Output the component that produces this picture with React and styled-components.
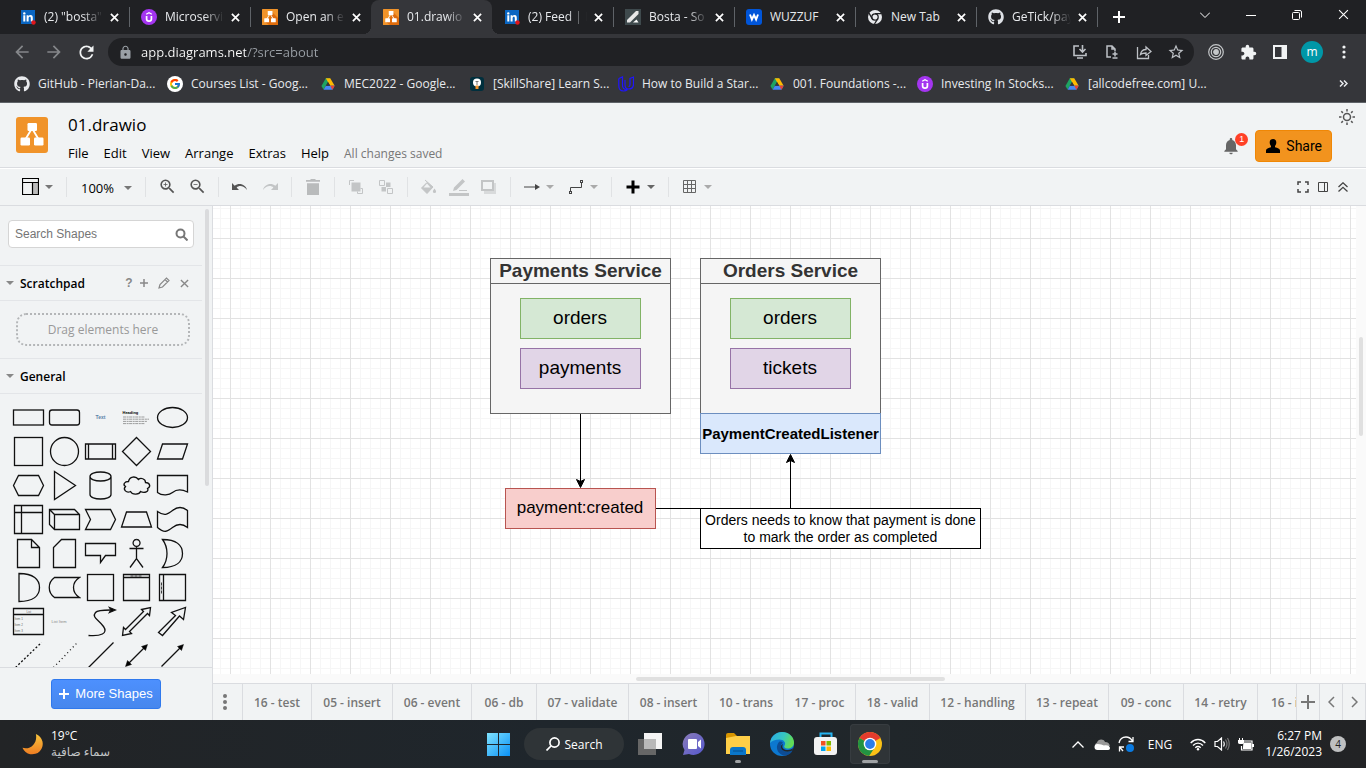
import React from "react";
import styled, { createGlobalStyle, css } from "styled-components";
import {
  MdLock, MdExtension, MdNotifications, MdZoomIn, MdZoomOut,
  MdStarBorder, MdRefresh, MdArrowBack, MdArrowForward,
} from "react-icons/md";
import { FaGithub } from "react-icons/fa";
import { FcGoogle } from "react-icons/fc";

const ui = '"Open Sans", "Noto Sans", "DejaVu Sans", sans-serif';
const arial = '"Liberation Sans", Arial, sans-serif';

const GlobalStyle = createGlobalStyle`
  * { box-sizing: border-box; }
  body { margin: 0; font-family: ${ui}; font-size: 12px; color: #000; background: #f1f3f4; }
  button { font: inherit; color: inherit; background: none; border: 0; padding: 0; margin: 0; cursor: pointer; }
  a { color: inherit; text-decoration: none; }
  h1, h2, p { margin: 0; font-weight: 400; }
  svg { display: block; flex: none; }
`;

const Shell = styled.div`
  display: flex;
  flex-direction: column;
  height: 100vh;
  overflow: hidden;
`;

/* ---------- browser chrome ---------- */
const TabStrip = styled.nav`
  display: flex;
  height: 34px;
  padding-left: 8px;
  background: #202124;
  color: #dee1e6;
  flex: none;
`;
const Tab = styled.div`
  position: relative;
  display: flex;
  align-items: center;
  flex: 0 1 121px;
  min-width: 0;
  padding: 0 7px 0 12px;
  border-radius: 8px 8px 0 0;
  ${(p) => p.$active && css`background: #35363a; z-index: 1;
    &::before, &::after { content: ""; position: absolute; bottom: 0; width: 8px; height: 8px; }
    &::before { left: -8px; background: radial-gradient(circle at 0 0, transparent 8px, #35363a 8px); }
    &::after { right: -8px; background: radial-gradient(circle at 100% 0, transparent 8px, #35363a 8px); }
  `}
  ${(p) => p.$divider && css`
    &::after { content: ""; position: absolute; right: -1px; top: 7px; width: 1px; height: 20px; background: #5f6368; }
  `}
`;
const TabLink = styled.a`
  display: flex;
  align-items: center;
  flex: 1;
  min-width: 0;
  gap: 8px;
`;
const TabTitle = styled.span`
  flex: 1;
  min-width: 0;
  overflow: hidden;
  white-space: nowrap;
  line-height: 20px;
  color: #e8eaed;
  ${(p) => p.$fade && css`mask-image: linear-gradient(90deg, #000 66%, transparent);`}
`;
const TabClose = styled.button`
  display: flex;
  align-items: center;
  justify-content: center;
  width: 16px;
  height: 16px;
  margin-left: 3px;
  color: #fff;
`;
const NewTab = styled.button`
  width: 28px;
  margin: 0 8px;
  display: flex;
  align-items: center;
  justify-content: center;
  color: #fff;
`;
const WindowButtons = styled.div`
  display: flex;
  margin-left: auto;
`;
const WindowButton = styled.button`
  display: flex;
  align-items: center;
  justify-content: center;
  width: 46px;
  height: 29px;
  color: #fff;
`;
const AddressRow = styled.div`
  display: flex;
  align-items: center;
  height: 36px;
  padding: 0 6px;
  background: #35363a;
  color: #f1f3f4;
  flex: none;
`;
const IconButton = styled.button`
  display: flex;
  align-items: center;
  justify-content: center;
  width: 32px;
  height: 28px;
  flex: none;
  color: ${(p) => p.$color || "inherit"};
`;
const AddressBar = styled.div`
  display: flex;
  align-items: center;
  flex: 1;
  min-width: 0;
  height: 28px;
  margin: 0 6px;
  padding: 0 2px 0 10px;
  border-radius: 14px;
  background: #202124;
  color: #bdc1c6;
`;
const AddressInput = styled.input`
  flex: 1;
  min-width: 0;
  height: 20px;
  margin-left: 8px;
  padding: 0;
  border: 0;
  outline: 0;
  font: 13px/20px ${ui};
  color: transparent;
  background: linear-gradient(90deg, #fff 105px, #9aa0a6 105px);
  background-clip: text;
  -webkit-background-clip: text;
`;
const Avatar = styled.span`
  display: grid;
  place-items: center;
  width: 22px;
  height: 22px;
  border-radius: 50%;
  background: #0097a7;
  color: #fff;
  font-size: 12px;
  line-height: 20px;
`;
const BookmarkBar = styled.nav`
  display: flex;
  align-items: center;
  height: 33px;
  padding: 0 14px 5px;
  background: #35363a;
  border-bottom: 1px solid #5f6368;
  color: #e8eaed;
  flex: none;
`;
const Bookmark = styled.a`
  display: flex;
  align-items: center;
  gap: 8px;
  flex: 0 1 ${(p) => p.$w}px;
  min-width: 0;
  white-space: nowrap;
  line-height: 18px;
`;
const MoreBookmarks = styled.button`
  margin-left: auto;
  width: 18px;
  height: 18px;
  display: flex;
  align-items: center;
  justify-content: center;
`;

/* ---------- editor header ---------- */
const Header = styled.header`
  display: flex;
  height: 65px;
  padding-left: 16px;
  background: #f1f3f4;
  border-bottom: 1px solid #dadce0;
  flex: none;
`;
const Logo = styled.a`
  display: block;
  margin: 14px 20px 0 0;
`;
const TitleBlock = styled.div`
  flex: 1;
  padding-top: 10px;
`;
const FileName = styled.h1`
  font-size: 17px;
  line-height: 24px;
`;
const MenuBar = styled.nav`
  display: flex;
  align-items: center;
  gap: 15px;
  height: 32px;
  font-size: 13px;
`;
const Status = styled.span`
  font-size: 12px;
  color: #777;
`;
const HeaderRight = styled.div`
  display: flex;
  align-items: flex-start;
  padding: 5px 10px 0 0;
`;
const BellButton = styled.button`
  position: relative;
  margin: 28px 14px 0 0;
  color: #666;
`;
const BellBadge = styled.span`
  position: absolute;
  top: -3px;
  right: -7px;
  width: 13px;
  height: 13px;
  border-radius: 50%;
  background: #ff4027;
  color: #fff;
  font: 9px/13px ${arial};
  text-align: center;
`;
const ShareButton = styled.button`
  display: flex;
  align-items: center;
  gap: 4px;
  height: 32px;
  margin: 22px 6px 0 0;
  padding: 0 9px 0 8px;
  border: 1px solid #f08705;
  border-radius: 4px;
  background: #f2931e;
  font-family: Roboto, ${arial};
  font-size: 14px;
`;
const ThemeButton = styled.button`
  color: #555;
`;
const Toolbar = styled.div`
  display: flex;
  align-items: center;
  height: 38px;
  padding: 0 13px 1px 10px;
  background: #f1f3f4;
  border-top: 1px solid #fff;
  border-bottom: 1px solid #dadce0;
  flex: none;
`;
const ToolGroup = styled.div`
  display: flex;
  align-items: center;
  height: 20px;
  padding: 0 6px;
  border-right: 1px solid ${(p) => (p.$last ? "transparent" : "#e0e2e4")};
`;
const ToolButton = styled.button`
  display: flex;
  align-items: center;
  justify-content: center;
  width: 30px;
  height: 24px;
  color: ${(p) => (p.$off ? "#c3c5c6" : "#555")};
`;
const DropButton = styled.button`
  display: flex;
  align-items: center;
  width: 44px;
  height: 24px;
  color: #444;
`;
const DropIcon = styled.span`
  display: flex;
  justify-content: center;
  width: 29px;
`;
const ZoomButton = styled.button`
  display: flex;
  align-items: center;
  justify-content: space-between;
  width: 66px;
  height: 24px;
  padding: 2px 7px 0 8px;
  font-size: 13px;
`;
const ToolbarEnd = styled.div`
  display: flex;
  margin-left: auto;
`;
const SmallTool = styled.button`
  display: flex;
  align-items: center;
  justify-content: center;
  width: 20px;
  height: 20px;
  color: #444;
`;

/* ---------- main area ---------- */
const Main = styled.main`
  display: flex;
  flex: 1;
  min-height: 0;
`;
const Sidebar = styled.aside`
  display: flex;
  flex-direction: column;
  width: 213px;
  flex: none;
  background: #f1f3f4;
  border-right: 1px solid #dadce0;
`;
const SidebarScroll = styled.div`
  display: flex;
  justify-content: space-between;
  flex: 1;
  min-height: 0;
  overflow: hidden;
`;
const Palettes = styled.div`
  width: 202px;
`;
const ScrollThumb = styled.div`
  width: 4px;
  height: 277px;
  margin: 3px 3px 0 0;
  border-radius: 2px;
  background: #dadbdd;
`;
const SearchBox = styled.label`
  display: flex;
  align-items: center;
  height: 28px;
  margin: 14px 8px 17px;
  padding: 0 5px 0 6px;
  border: 1px solid #d5d5d5;
  border-radius: 4px;
  background: #fff;
  color: #777;
`;
const SearchInput = styled.input`
  flex: 1;
  min-width: 0;
  padding: 0;
  border: 0;
  outline: 0;
  background: transparent;
  font: 12px/18px ${arial};
  &::placeholder { color: #757575; opacity: 1; }
`;
const SectionTitle = styled.h2`
  display: flex;
  align-items: center;
  gap: 6px;
  height: 36px;
  padding: 0 13px 0 6px;
  border: solid #e3e5e8;
  border-width: 1px 0;
  font-size: 12px;
  font-weight: 600;
`;
const SectionName = styled.span`
  flex: 1;
`;
const SectionTool = styled.button`
  display: flex;
  align-items: center;
  justify-content: center;
  width: ${(p) => p.$w || 10}px;
  height: 16px;
  color: #888;
  font: 700 12px/16px ${arial};
`;
const DropZone = styled.div`
  display: flex;
  align-items: center;
  justify-content: center;
  height: 33px;
  margin: 12px 12px 12px 16px;
  border: 2px dotted #b4b6b8;
  border-radius: 10px;
  color: #999;
  font-size: 12px;
`;
const ShapeGrid = styled.div`
  display: grid;
  grid-template-columns: repeat(5, 36px);
  grid-auto-rows: 34px;
  padding: 6px 0 0 10px;
`;
const ShapeButton = styled.button`
  display: flex;
  align-items: center;
  justify-content: center;
`;
const SidebarFooter = styled.div`
  display: flex;
  justify-content: center;
  height: 53px;
  padding-top: 11px;
  border-top: 1px solid #dadce0;
  flex: none;
`;
const MoreShapes = styled.button`
  display: flex;
  align-items: center;
  justify-content: center;
  gap: 6px;
  width: 110px;
  height: 30px;
  border: 1px solid #3079ed;
  border-radius: 3px;
  background: linear-gradient(#4d90fe, #4787ed);
  color: #fff;
  font: 13px/20px ${arial};
`;
const Workspace = styled.section`
  display: flex;
  flex-direction: column;
  flex: 1;
  min-width: 0;
`;
const CanvasFrame = styled.div`
  display: grid;
  grid-template: minmax(0, 1fr) 9px / minmax(0, 1fr) 10px;
  flex: 1;
  min-height: 0;
  background: #fafafa;
`;
const Canvas = styled.div`
  position: relative;
  overflow: hidden;
  background-color: #fff;
  background-image:
    linear-gradient(90deg, #e2e2e2 1px, transparent 1px),
    linear-gradient(#e2e2e2 1px, transparent 1px),
    linear-gradient(90deg, #f6f6f6 1px, transparent 1px),
    linear-gradient(#f6f6f6 1px, transparent 1px);
  background-size: 40px 40px, 40px 40px, 10px 10px, 10px 10px;
  background-position: 17px 32px, 17px 32px, 7px 2px, 7px 2px;
`;
const VerticalThumb = styled.div`
  width: 4px;
  height: 99px;
  margin: 131px 0 0 3px;
  border-radius: 2px;
  background: #e0e0e0;
`;
const HorizontalThumb = styled.div`
  width: 27%;
  height: 4px;
  margin: 3px 0 0 37%;
  border-radius: 2px;
  background: #e0e0e0;
`;
const Node = styled.div`
  position: absolute;
  left: ${(p) => p.$x}px;
  top: ${(p) => p.$y}px;
  width: ${(p) => p.$w}px;
  height: ${(p) => p.$h}px;
  display: flex;
  align-items: center;
  justify-content: center;
  text-align: center;
  white-space: nowrap;
  border: 1px solid ${(p) => p.$line};
  background: ${(p) => p.$fill};
  font: ${(p) => (p.$bold ? 700 : 400)} ${(p) => p.$size}px/${(p) => p.$lh || 20}px ${arial};
`;
const Lane = styled(Node)`
  display: block;
`;
const Box = styled(Node)`
  padding: 0 1px 2px 0;
`;
const LaneTitle = styled.div`
  height: 25px;
  line-height: 24px;
  border-bottom: 1px solid #666;
  color: #333;
`;
const Edges = styled.svg`
  position: absolute;
  left: 0;
  top: 0;
`;
const PageTabs = styled.nav`
  display: flex;
  height: 37px;
  border-top: 1px solid #dadce0;
  background: #f1f3f4;
  color: #777;
  flex: none;
`;
const PageMenu = styled.button`
  display: flex;
  align-items: center;
  justify-content: center;
  width: ${(p) => p.$w || 23}px;
  padding-right: ${(p) => (p.$w ? 6 : 0)}px;
  border-right: 1px solid #dadce0;
  flex: none;
`;
const PageList = styled.div`
  display: flex;
  flex: 1;
  min-width: 0;
  overflow: hidden;
  border-right: 1px solid #dadce0;
`;
const PageTab = styled.button`
  width: ${(p) => p.$w}px;
  flex: none;
  border-right: 1px solid #dadce0;
  font-size: 12px;
  font-weight: 600;
  white-space: nowrap;
`;

/* ---------- taskbar ---------- */
const Taskbar = styled.footer`
  display: grid;
  grid-template-columns: 1fr auto 1fr;
  align-items: center;
  height: 48px;
  padding: 0 20px 0 22px;
  background: linear-gradient(90deg, #222426, #1f262c 40%, #20262a 65%, #222325);
  color: #fff;
  flex: none;
`;
const Weather = styled.button`
  display: flex;
  align-items: center;
  gap: 7px;
  justify-self: start;
  text-align: left;
  line-height: 16px;
`;
const Lines = styled.span`
  display: flex;
  flex-direction: column;
`;
const Arabic = styled.span`
  color: #c4c6c8;
`;
const TaskButtons = styled.div`
  display: flex;
  align-items: center;
`;
const TaskButton = styled.button`
  position: relative;
  display: grid;
  place-items: center;
  width: 40px;
  height: 40px;
  margin: 0 2px;
  border-radius: 4px;
  ${(p) => p.$active && css`background: #2f3437; box-shadow: inset 0 0 0 1px #373c40;`}
  ${(p) => p.$running && css`
    &::after { content: ""; position: absolute; bottom: 1px; left: 50%; width: ${p.$active ? 16 : 6}px; height: 3px;
      margin-left: ${p.$active ? -8 : -3}px; border-radius: 2px; background: #a0a3a5; }
  `}
`;
const TaskSearch = styled.button`
  display: flex;
  align-items: center;
  justify-content: center;
  gap: 5px;
  width: 100px;
  height: 32px;
  margin: 0 4px;
  border-radius: 16px;
  background: #2f3437;
`;
const Tray = styled.div`
  display: flex;
  align-items: center;
  justify-self: end;
`;
const TrayButton = styled.button`
  display: flex;
  align-items: center;
  justify-content: center;
  width: ${(p) => p.$w || 24}px;
  height: 32px;
`;
const Clock = styled.button`
  width: 60px;
  text-align: right;
  line-height: 16px;
`;
const CountBadge = styled.span`
  display: grid;
  place-items: center;
  width: 16px;
  height: 16px;
  margin-left: 8px;
  border-radius: 50%;
  background: #bfc0c1;
  color: #222;
  font-size: 10px;
  line-height: 16px;
`;

/* ---------- icons ---------- */
const Svg = ({ w = 16, h = w, box, sw = 1, children }) => (
  <svg width={w} height={h} viewBox={box || `0 0 ${w} ${h}`} fill="none" stroke="currentColor" strokeWidth={sw} aria-hidden="true">
    {children}
  </svg>
);
const Cross = ({ s = 10, sw = 1.6 }) => <Svg w={s} box="0 0 10 10" sw={sw}><path d="M1 1l8 8M9 1l-8 8" /></Svg>;
const Caret = ({ color = "#888" }) => <Svg w={8} h={4}><path d="M0 0h8l-4 4z" fill={color} stroke="none" /></Svg>;

const LinkedIn = () => (
  <Svg w={16}>
    <rect x="1" y="1" width="14" height="14" fill="#0a66c2" stroke="none" />
    <g fill="#fff" stroke="none"><circle cx="4.3" cy="4.4" r="1.2" /><path d="M3.3 6.3h2v6.2h-2zM6.6 6.3h1.9v.9c.4-.7 1.1-1.1 2-1.1 1.8 0 2.300 1.200 2.300 2.900v3.500h-2V9.300c0-.9-.2-1.500-1-1.500s-1.200.6-1.200 1.500v3.200h-2z" /></g>
    <circle cx="13.5" cy="13.5" r="2.2" fill="#e0161b" stroke="none" />
  </Svg>
);
const Udemy = () => (
  <Svg w={16}>
    <circle cx="8" cy="8" r="8" fill="#a435f0" stroke="none" />
    <path d="M5.2 5.3L8 3.700l2.800 1.600" stroke="#fff" strokeWidth="1.300" />
    <path d="M5.600 7v3c0 1.500 1 2.200 2.400 2.200s2.400-.7 2.400-2.200V7" stroke="#fff" strokeWidth="1.700" />
  </Svg>
);
const Drawio = ({ w = 16, h = 16 }) => (
  <Svg w={w} h={h} box={w === h ? "0 2 32 32" : "0 0 32 36"}>
    <rect x="0" y={w === h ? 2 : 0} width="32" height={w === h ? 32 : 36} rx={w === h ? 1 : 3} fill="#f0932a" stroke="none" />
    {w === h && <path d="M20 8l12 12v14H14l-8-6 10-12z" fill="#df6c0c" stroke="none" />}
    <path d="M15 13L9 23M17 13l6 10" stroke="#fff" strokeWidth="1.800" />
    <g fill="#fff" stroke="none"><rect x="11.500" y="6" width="9.500" height="8" rx="1.200" /><rect x="4.500" y="20.500" width="9.500" height="8" rx="1.200" /><rect x="18" y="20.500" width="9.500" height="8" rx="1.200" /></g>
  </Svg>
);
const BostaIcon = () => (
  <Svg w={16}><rect width="16" height="16" fill="#3f4a4d" stroke="none" /><path d="M2 13.500V11L11 2h2.500v3L5 13.500z" fill="#e8e8e8" stroke="none" /><path d="M8 13.500l3.500-3 2 3z" fill="#fff" stroke="none" /></Svg>
);
const Wuzzuf = () => (
  <Svg w={16}><rect width="16" height="16" rx="3" fill="#0055d9" stroke="none" /><path d="M4 5.500l1.900 5L8 6l2.100 4.500L12 5.500" stroke="#fff" strokeWidth="1.900" /></Svg>
);
const ChromeMono = () => (
  <Svg w={16}><circle cx="8" cy="8" r="7" fill="#e8eaed" stroke="none" /><circle cx="8" cy="8" r="3.200" fill="#e8eaed" stroke="#202124" strokeWidth="1.300" /><path d="M8 4.700h6.500M5.200 9.700L2 4.200M10.800 9.700L7.500 15" stroke="#202124" strokeWidth="1.300" /></Svg>
);
const Drive = () => (
  <Svg w={16} box="-1 -1 18 18">
    <g stroke="none"><path d="M5.500 1.500h5L5.600 10 3 14.300.6 10.200z" fill="#1ea362" /><path d="M5.500 1.500h5l5 8.600h-5z" fill="#ffba00" /><path d="M5.600 10h9.900L13 14.400H3z" fill="#4688f4" /><path d="M8 5.800L5.600 10h4.900z" fill="#35363a" /><path d="M13 14.400l2.500-4.300h-5z" fill="#e94235" /></g>
  </Svg>
);
const Bulb = () => (
  <Svg w={16}><rect x="1" y="1" width="14" height="14" rx="3" fill="#002f3d" stroke="none" /><circle cx="8" cy="6.500" r="4" fill="#fff" stroke="none" /><path d="M6.500 9.500h3v3.500h-3z" fill="#f0932a" stroke="none" /><path d="M6.500 5.500h3M8 5.500V9" stroke="#777" /></Svg>
);
const Udacity = () => (
  <Svg w={16}><path d="M.8 2.500L4.500 1v8c0 3 1.500 4.500 4 4.500M.8 2.500V9.500c0 3.500 2 5.500 4.700 5.500 1.500 0 3-.5 4-1.500M7 4v4.500c0 3 1 4.500 3.500 4.500s5-1.500 5-5V1L12 2.500V8c0 1.500-.5 2.500-1.500 2.500" stroke="#2015ff" strokeWidth="1.200" /></Svg>
);
const ChromeColor = () => (
  <Svg w={24}>
    <g stroke="none"><circle cx="12" cy="12" r="12" fill="#fbc116" /><path d="M12 12L1.600 6A12 12 0 0 1 22.400 6z" fill="#e33b2e" /><path d="M1.600 6a12 12 0 0 0 9.500 18l5.900-9-5-3z" fill="#229342" /><circle cx="12" cy="12" r="6.300" fill="#fff" /><circle cx="12" cy="12" r="4.900" fill="#2a7de9" /></g>
  </Svg>
);

const tabs = [
  { title: "(2) \"bosta\"", icon: <LinkedIn />, divider: true, fade: true },
  { title: "Microservic", icon: <Udemy />, divider: true, fade: true },
  { title: "Open an e", icon: <Drawio />, fade: true },
  { title: "01.drawio", icon: <Drawio />, active: true, fade: true },
  { title: "(2) Feed | L", icon: <LinkedIn />, divider: true, fade: true },
  { title: "Bosta - So", icon: <BostaIcon />, divider: true, fade: true },
  { title: "WUZZUF", icon: <Wuzzuf />, divider: true },
  { title: "New Tab", icon: <ChromeMono />, divider: true },
  { title: "GeTick/pay", icon: <FaGithub size={16} />, divider: true, fade: true },
];
const bookmarks = [
  ["GitHub - Pierian-Da...", <FaGithub size={16} />, 153],
  ["Courses List - Goog...", <Svg w={16}><circle cx="8" cy="8" r="8" fill="#fff" stroke="none" /><FcGoogle x="2" y="2" size={12} /></Svg>, 153],
  ["MEC2022 - Google...", <Drive />, 149],
  ["[SkillShare] Learn S...", <Bulb />, 149],
  ["How to Build a Star...", <Udacity />, 151],
  ["001. Foundations -...", <Drive />, 148],
  ["Investing In Stocks...", <Udemy />, 147],
  ["[allcodefree.com] U...", <Drive />, 149],
];

const Browser = () => (
  <>
    <TabStrip aria-label="Browser tabs">
      {tabs.map(({ title, icon, divider, active, fade }) => (
        <Tab key={title} $divider={divider} $active={active}>
          <TabLink href="#tab">{icon}<TabTitle $fade={fade}>{title}</TabTitle></TabLink>
          <TabClose aria-label="Close tab"><Cross s={9} sw={1.900} /></TabClose>
        </Tab>
      ))}
      <NewTab aria-label="New tab"><Svg w={12} sw={2}><path d="M6 0v12M0 6h12" /></Svg></NewTab>
      <WindowButtons>
        <WindowButton aria-label="Search tabs"><Svg w={10} h={6}><path d="M0 .5l5 5 5-5" /></Svg></WindowButton>
        <WindowButton aria-label="Minimize"><Svg w={10}><path d="M0 5.500h10" /></Svg></WindowButton>
        <WindowButton aria-label="Restore"><Svg w={10}><rect x=".5" y="2.500" width="7" height="7" rx="1" /><path d="M2.500.500H8Q9.500.500 9.500 2v5.500" /></Svg></WindowButton>
        <WindowButton aria-label="Close window"><Cross s={11} sw={1} /></WindowButton>
      </WindowButtons>
    </TabStrip>
    <AddressRow>
      <IconButton $color="#85878a" aria-label="Back"><MdArrowBack size={20} /></IconButton>
      <IconButton $color="#85878a" aria-label="Forward"><MdArrowForward size={20} /></IconButton>
      <IconButton aria-label="Reload"><MdRefresh size={21} /></IconButton>
      <AddressBar>
        <MdLock size={15} color="#9aa0a6" />
        <AddressInput aria-label="Address" defaultValue="app.diagrams.net/?src=about" />
        <IconButton aria-label="Install app"><Svg w={16} sw={1.600}><path d="M7 2H2v9.500h12V9M5 14h6M10.500 1v6.500M7.500 5l3 3 3-3" /></Svg></IconButton>
        <IconButton aria-label="Save page"><Svg w={16} sw={1.500}><path d="M7 13H3V2h5l3 3v2M8 2v3h3M11 7.500v5M8.500 10h5M8.500 14h5" /></Svg></IconButton>
        <IconButton aria-label="Share page"><Svg w={16} sw={1.300}><path d="M1.500 3v11.500h11V11M4.500 10.500C5 7 7 5.500 10 5.500V3l5 4.500-5 4V9C8 9 6 9.300 4.500 10.500z" /></Svg></IconButton>
        <IconButton aria-label="Bookmark page"><MdStarBorder size={18} /></IconButton>
      </AddressBar>
      <IconButton aria-label="Screen recorder" $color="#c4c7c9"><Svg w={16} sw={1.200}><circle cx="8" cy="8" r="7.300" /><circle cx="8" cy="8" r="4.700" /><circle cx="8" cy="8" r="2.300" fill="currentColor" /></Svg></IconButton>
      <IconButton aria-label="Extensions"><MdExtension size={17} /></IconButton>
      <IconButton aria-label="Side panel"><Svg w={14} sw={2}><rect x="1" y="1" width="12" height="12" /><path d="M8.500 1H13v12H8.500z" fill="currentColor" stroke="none" /></Svg></IconButton>
      <IconButton aria-label="Profile"><Avatar>m</Avatar></IconButton>
      <IconButton aria-label="Browser menu"><Svg w={4} h={14}><g fill="currentColor" stroke="none"><circle cx="2" cy="2" r="1.600" /><circle cx="2" cy="7" r="1.600" /><circle cx="2" cy="12" r="1.600" /></g></Svg></IconButton>
    </AddressRow>
    <BookmarkBar aria-label="Bookmarks">
      {bookmarks.map(([label, icon, w]) => <Bookmark href="#bookmark" key={label} $w={w}>{icon}{label}</Bookmark>)}
      <MoreBookmarks aria-label="More bookmarks"><Svg w={9} h={7} sw={1.500}><path d="M1 .5l3 3-3 3M5 .5l3 3-3 3" /></Svg></MoreBookmarks>
    </BookmarkBar>
  </>
);

const EditorHeader = () => (
  <>
    <Header>
      <Logo href="#home" aria-label="Home"><Drawio w={32} h={36} /></Logo>
      <TitleBlock>
        <FileName>01.drawio</FileName>
        <MenuBar aria-label="Main menu">
          {["File", "Edit", "View", "Arrange", "Extras", "Help"].map((m) => <button key={m}>{m}</button>)}
          <Status>All changes saved</Status>
        </MenuBar>
      </TitleBlock>
      <HeaderRight>
        <BellButton aria-label="Notifications"><MdNotifications size={20} /><BellBadge>1</BellBadge></BellButton>
        <ShareButton>
          <Svg w={18}><path d="M9 2c2.300 0 3.300 1.500 3.300 3.500 0 1.500-.6 2.800-1.300 3.500v1.300c2.500.8 5 1.400 5 3.200V16H2v-2.500c0-1.800 2.500-2.400 5-3.200V9c-.7-.7-1.300-2-1.300-3.500C5.700 3.500 6.700 2 9 2z" fill="#000" stroke="none" /></Svg>
          Share
        </ShareButton>
        <ThemeButton aria-label="Theme"><Svg w={18} sw={1.500}><circle cx="9" cy="9" r="3.500" /><path d="M9 1v2.500M9 14.500V17M1 9h2.500M14.500 9H17M3.300 3.300l1.600 1.600M13.100 13.100l1.600 1.600M14.700 3.300l-1.600 1.600M4.900 13.100l-1.600 1.600" /></Svg></ThemeButton>
      </HeaderRight>
    </Header>
    <Toolbar>
      <ToolGroup>
        <DropButton aria-label="Layout"><DropIcon><Svg w={17}><rect x="10.500" y="4.500" width="5.500" height="12" fill="#bbb" stroke="none" /><path d="M.5.500h16v16H.500zM.5 4.500h16M10.500 4.500v12" stroke="#000" strokeWidth="1.200" /></Svg></DropIcon><Caret color="#777" /></DropButton>
      </ToolGroup>
      <ToolGroup><ZoomButton aria-label="Zoom level">100%<Caret color="#777" /></ZoomButton></ToolGroup>
      <ToolGroup>
        <ToolButton aria-label="Zoom in"><MdZoomIn size={19} /></ToolButton>
        <ToolButton aria-label="Zoom out"><MdZoomOut size={19} /></ToolButton>
      </ToolGroup>
      <ToolGroup>
        <ToolButton aria-label="Undo"><Svg w={16} h={10}><path d="M0 1v7h7L4.600 5.500C7 3 12 3.500 15 8c-1-5.500-8-8-12.300-4.200z" fill="currentColor" stroke="none" /></Svg></ToolButton>
        <ToolButton aria-label="Redo" $off><Svg w={16} h={10}><path d="M16 1v7H9l2.400-2.500C9 3 4 3.500 1 8 2 2.500 9 0 13.300 3.800z" fill="currentColor" stroke="none" /></Svg></ToolButton>
      </ToolGroup>
      <ToolGroup><ToolButton aria-label="Delete" $off><Svg w={14} h={16}><path d="M0 1h4l1-1h4l1 1h4v1.800H0zM1 4.200h12V16H1z" fill="#b9bbbc" stroke="none" /></Svg></ToolButton></ToolGroup>
      <ToolGroup>
        <ToolButton aria-label="To front" $off><Svg w={16}><path d="M3.500 3.500h9v9h-9z" fill="currentColor" stroke="none" /><path d="M1.500 6V1.500H6M12.500 9.500h2v5h-5v-2" /></Svg></ToolButton>
        <ToolButton aria-label="To back" $off><Svg w={16}><path d="M8 3.500h4.500v4.500H8zM3.500 8H8v4.500H3.500z" fill="currentColor" stroke="none" /><path d="M1.500 1.500h5v5h-5zM9.500 9.500h5v5h-5z" /></Svg></ToolButton>
      </ToolGroup>
      <ToolGroup>
        <ToolButton aria-label="Fill color" $off><Svg w={18} h={16}><path d="M5 1l8 7-6 6.500L1.500 9 7 3.500" fill="currentColor" stroke="currentColor" strokeWidth="1" /><path d="M3.500 8.500h7L7 4.500z" fill="#f1f3f4" stroke="none" /><path d="M14.500 9.500c1 1.500 1.600 2.200 1.600 3a1.600 1.600 0 0 1-3.200 0c0-.8.600-1.500 1.600-3z" fill="currentColor" stroke="none" /></Svg></ToolButton>
        <ToolButton aria-label="Line color" $off><Svg w={20} h={18}><path d="M0 15h20v3H0zM4 13l1-3.500L13.500 1 16 3.500 7.500 12z" fill="currentColor" stroke="none" /><path d="M10 12.500h8" /></Svg></ToolButton>
        <ToolButton aria-label="Shadow" $off><Svg w={16} h={14}><path d="M3 3h12v11H3z" fill="#d8dadb" stroke="none" /><rect x="1" y="1" width="11" height="9" fill="#f1f3f4" strokeWidth="2" /></Svg></ToolButton>
      </ToolGroup>
      <ToolGroup>
        <DropButton aria-label="Connection"><DropIcon><Svg w={16} h={6}><path d="M0 3h12" /><path d="M11 0l5 3-5 3z" fill="currentColor" stroke="none" /></Svg></DropIcon><Caret color="#aaa" /></DropButton>
        <DropButton aria-label="Waypoints"><DropIcon><Svg w={16} h={16}><path d="M2.500 12.500V8.500h11V3.500" /><rect x="1.500" y="12.500" width="2" height="2" /><rect x="12.500" y="1.500" width="2" height="2" /></Svg></DropIcon><Caret color="#aaa" /></DropButton>
      </ToolGroup>
      <ToolGroup><DropButton aria-label="Insert"><DropIcon><Svg w={14} sw={3}><path d="M7 .5v13M.5 7h13" stroke="#000" /></Svg></DropIcon><Caret color="#666" /></DropButton></ToolGroup>
      <ToolGroup $last><DropButton aria-label="Table"><DropIcon><Svg w={13}><path d="M.5.500h12v12H.500zM4.500.500v12M8.500.500v12M.5 4.500h12M.5 8.500h12" stroke="#666" /></Svg></DropIcon><Caret color="#aaa" /></DropButton></ToolGroup>
      <ToolbarEnd>
        <SmallTool aria-label="Fullscreen"><Svg w={12} sw={1.500}><path d="M1 4V1h3M8 1h3v3M11 8v3H8M4 11H1V8" /></Svg></SmallTool>
        <SmallTool aria-label="Format panel"><Svg w={10}><path d="M.5.500h9v9h-9zM6.500.500v9" /></Svg></SmallTool>
        <SmallTool aria-label="Collapse"><Svg w={10} sw={1.300}><path d="M.5 5L5 .8 9.500 5M.5 9.500L5 5.300l4.500 4.200" /></Svg></SmallTool>
      </ToolbarEnd>
    </Toolbar>
  </>
);

/* Palette thumbnails, drawn around the centre of each cell */
const shapes = [
  ["Rectangle", <rect x="-15" y="-7.500" width="30" height="15" />],
  ["Rounded rectangle", <rect x="-15" y="-7.500" width="30" height="15" rx="2.500" />],
  ["Text", <text x="0" y="1" textAnchor="middle" fontSize="5" fontWeight="700" fill="#5c82a8" stroke="none">Text</text>],
  ["Textbox", <><text x="-14" y="-4" fontSize="4" fontWeight="700" fill="#000" stroke="none">Heading</text><path d="M-13.500-.5h22M-13.500 1.700h26M-13.500 3.900h24M-13.500 6.100h22" stroke="#777" strokeWidth=".7" strokeDasharray="3 .6 2 .5" /></>],
  ["Ellipse", <ellipse rx="15" ry="10" />],
  ["Square", <rect x="-14" y="-14" width="28" height="28" />],
  ["Circle", <circle r="14" />],
  ["Process", <path d="M-15-7.500h30v15h-30zM-12-7.500v15M12-7.500v15" />],
  ["Diamond", <path d="M0-14L14 0 0 14-14 0z" />],
  ["Parallelogram", <path d="M-10-7.500h25l-5 15h-25z" />],
  ["Hexagon", <path d="M-10-10h20l5 10-5 10h-20l-5-10z" />],
  ["Triangle", <path d="M-10-14L11 0l-21 14z" />],
  ["Cylinder", <path d="M-10.500-9v18c0 6 21 6 21 0V-9c0-6-21-6-21 0c0 6 21 6 21 0" />],
  ["Cloud", <path d="M-8-4c-4 0-6 3-3 5-3 3 1 7 5 5 2 4 9 3 10 0 4 2 9 0 7-3 4-2 2-6-2-6 0-4-5-5-7-3-3-4-9-3-10 2z" />],
  ["Document", <path d="M-15-10h30V6.500c-8-4-12-2-15 .5s-10 4-15 0z" />],
  ["Internal storage", <path d="M-14-14h28v28h-28zM-14-7h28M-7-14v28" />],
  ["Cube", <path d="M-15-10h25l5 5v15h-25l-5-5zM-15-10l5 5h25M-10-5v15" />],
  ["Step", <path d="M-15-10H10L15 0l-5 10h-25l5-10z" />],
  ["Trapezoid", <path d="M-10-7.500h20l5 15h-30z" />],
  ["Tape", <path d="M-15-8c7 5 10 3 15-1s10-4 15 0V8c-5-4-10-4-15 0s-8 6-15 0z" />],
  ["Note", <path d="M-11-14H3l8 8v20h-22zM3-14v8h8" />],
  ["Card", <path d="M-3-14h14v28h-22V-6z" />],
  ["Callout", <path d="M-15-10h30V2H5L0 9V2h-15z" />],
  ["Actor", <path d="M-7-5h14M0-7V5M-6.500 14L0 5l6.500 9M0-14a3.500 3.500 0 1 0 .1 0" />],
  ["Or", <path d="M-10-14C4-14 10-8 10 0S4 14-10 14C-4 6-4-6-10-14z" />],
  ["And", <path d="M-9.500-14C5-14 11-8 11 0S5 14-9.500 14z" />],
  ["Data storage", <path d="M-10-10h25C7-5 7 5 15 10h-25C-17 5-17-5-10-10z" />],
  ["Container", <rect x="-13" y="-13" width="26" height="26" />],
  ["Vertical container", <><path d="M-13-13h26v26h-26zM-13-10h26" /><path d="M-6-11.500h12" strokeDasharray="3 1" strokeWidth=".8" /></>],
  ["Horizontal container", <><path d="M-13-13h26v26h-26zM-9-13v26" /><path d="M-11-5V6" strokeDasharray="3 1" strokeWidth=".8" /></>],
  ["List", <><path d="M-15-13h30v26h-30zM-15-7h30" /><g stroke="none" fill="#666" fontSize="3"><text x="-2" y="-9">List</text><text x="-14" y="-2">Item 1</text><text x="-14" y="4">Item 2</text><text x="-14" y="10">Item 3</text></g></>],
  ["List item", <text x="-13" y="1" fontSize="4" fill="#888" stroke="none">List Item</text>],
  ["Curve", <><path d="M-12 14c12 1 20-2 15-9s-12-9-8-14c2-2.500 8-2.500 15-2.500" /><path d="M9-14l6 2.500-6 2.500 1.500-2.500z" fill="#000" /></>],
  ["Bidirectional arrow", <path d="M-14 14l1-8 2 2L7-10l-2-2 9-2-1 8-2-2L-7 10l2 2z" />],
  ["Arrow", <path d="M-14 11L3-6-1-9l14-5-2 12-4-3.500L-10 14z" />],
  ["Dashed line", <path d="M-13 12L13-13" strokeDasharray="2 2" />],
  ["Dotted line", <path d="M-11 12L12-12" strokeDasharray="1 3" />],
  ["Line", <path d="M-13 13L13-13" />],
  ["Bidirectional connector", <><path d="M-9 9L9-9" /><path d="M-11 11l2-6 4 4zM11-11L9-5 5-9z" fill="#000" strokeWidth=".5" /></>],
  ["Directional connector", <><path d="M-11 11L9-9" /><path d="M11-11L9-5 5-9z" fill="#000" strokeWidth=".5" /></>],
];

const ShapesPanel = () => (
  <Sidebar>
    <SidebarScroll>
      <Palettes>
        <SearchBox>
          <SearchInput placeholder="Search Shapes" aria-label="Search Shapes" />
          <Svg w={13} sw={2}><circle cx="5.500" cy="5.500" r="4" /><path d="M8.500 8.500l4 4" /></Svg>
        </SearchBox>
        <SectionTitle>
          <Caret color="#888" />
          <SectionName>Scratchpad</SectionName>
          <SectionTool $w={8} aria-label="Help">?</SectionTool>
          <SectionTool aria-label="Add"><Svg w={8} sw={1.500}><path d="M4 0v8M0 4h8" /></Svg></SectionTool>
          <SectionTool $w={18} aria-label="Edit"><Svg w={12} sw={1.200}><path d="M1 11l1-3.500L8.500 1 11 3.500 4.500 10zM7 2.500L9.500 5" /></Svg></SectionTool>
          <SectionTool aria-label="Close"><Cross s={9} sw={1.500} /></SectionTool>
        </SectionTitle>
        <DropZone>Drag elements here</DropZone>
        <SectionTitle><Caret color="#888" /><SectionName>General</SectionName></SectionTitle>
        <ShapeGrid>
          {shapes.map(([name, art]) => (
            <ShapeButton key={name} aria-label={name}>
              <svg width="34" height="32" viewBox="-17.5 -16.5 34 32" fill="none" stroke="#111" strokeWidth="1.300" fontFamily="Liberation Sans, sans-serif">{art}</svg>
            </ShapeButton>
          ))}
        </ShapeGrid>
      </Palettes>
      <ScrollThumb />
    </SidebarScroll>
    <SidebarFooter>
      <MoreShapes><Svg w={10} sw={2}><path d="M5 0v10M0 5h10" /></Svg>More Shapes</MoreShapes>
    </SidebarFooter>
  </Sidebar>
);

const small = { $w: 121, $h: 41, $size: 19 };
const green = { ...small, $fill: "#d5e8d4", $line: "#82b366" };
const purple = { ...small, $fill: "#e1d5e7", $line: "#9673a6" };
const lane = { $w: 181, $h: 156, $size: 19, $bold: true, $fill: "#f5f5f5", $line: "#666" };

const Diagram = () => (
  <Canvas>
    <Lane $x={277} $y={52} {...lane}><LaneTitle>Payments Service</LaneTitle></Lane>
    <Lane $x={487} $y={52} {...lane}><LaneTitle>Orders Service</LaneTitle></Lane>
    <Box $x={307} $y={92} {...green}>orders</Box>
    <Box $x={307} $y={142} {...purple}>payments</Box>
    <Box $x={517} $y={92} {...green}>orders</Box>
    <Box $x={517} $y={142} {...purple}>tickets</Box>
    <Node $x={487} $y={207} $w={181} $h={41} $fill="#dae8fc" $line="#6c8ebf" $size={15} $bold>PaymentCreatedListener</Node>
    <Edges width="800" height="360" fill="none" stroke="#000">
      <path d="M367.500 208v70M443 302.500h134.500V252" />
      <path d="M367.500 281.500l-4-8 4 2 4-2zM577.500 248.500l-4 8 4-2 4 2z" fill="#000" />
    </Edges>
    <Box $x={292} $y={282} $w={151} $h={41} $fill="#f8cecc" $line="#b85450" $size={17}>payment:created</Box>
    <Node $x={487} $y={302} $w={281} $h={41} $fill="#fff" $line="#000" $size={14} $lh={17}>Orders needs to know that payment is done<br />to mark the order as completed</Node>
  </Canvas>
);

const pages = [
  ["16 - test", 69], ["05 - insert", 81], ["06 - event", 79], ["06 - db", 65], ["07 - validate", 92],
  ["08 - insert", 80], ["10 - trans", 75], ["17 - proc", 72], ["18 - valid", 74], ["12 - handling", 96],
  ["13 - repeat", 83], ["09 - conc", 75], ["14 - retry", 74], ["16 - i", 54],
];

const Pages = () => (
  <PageTabs aria-label="Pages">
    <PageMenu $w={30} aria-label="Pages menu"><Svg w={4} h={16}><g fill="#777" stroke="none"><circle cx="2" cy="2" r="2" /><circle cx="2" cy="8" r="2" /><circle cx="2" cy="14" r="2" /></g></Svg></PageMenu>
    <PageList>{pages.map(([name, w]) => <PageTab key={name} $w={w}>{name}</PageTab>)}</PageList>
    <PageMenu aria-label="Insert page"><Svg w={14} sw={2}><path d="M7 0v14M0 7h14" /></Svg></PageMenu>
    <PageMenu aria-label="Previous"><Svg w={7} h={12} sw={1.500}><path d="M6 1L1 6l5 5" /></Svg></PageMenu>
    <PageMenu aria-label="Next"><Svg w={7} h={12} sw={1.500}><path d="M1 1l5 5-5 5" /></Svg></PageMenu>
  </PageTabs>
);

const WindowsTaskbar = () => (
  <Taskbar>
    <Weather>
      <Svg w={22} box="1 0 22 23"><defs><linearGradient id="moon" x2="0" y2="1"><stop stopColor="#f8c53d" /><stop offset="1" stopColor="#ef7d22" /></linearGradient></defs><path d="M15 1a11 11 0 1 1-14 14.500C10 18 17 10 15 1z" fill="url(#moon)" stroke="none" /></Svg>
      <Lines><span>19°C</span><Arabic lang="ar" dir="rtl">سماء صافية</Arabic></Lines>
    </Weather>
    <TaskButtons>
      <TaskButton aria-label="Start"><Svg w={23}><defs><linearGradient id="win" x2="1" y2="1"><stop stopColor="#7fe3ff" /><stop offset="1" stopColor="#0a90f5" /></linearGradient></defs><path d="M0 0h11v11H0zM12 0h11v11H12zM0 12h11v11H0zM12 12h11v11H12z" fill="url(#win)" stroke="none" /></Svg></TaskButton>
      <TaskSearch><Svg w={14} sw={1.700}><circle cx="8.500" cy="5.500" r="4.600" /><path d="M5 9l-4.500 4.500" /></Svg>Search</TaskSearch>
      <TaskButton aria-label="Task view"><Svg w={24} h={22}><path d="M0 6h18v16H0z" fill="#666" stroke="none" /><path d="M6 0h18v16H6z" fill="#f4f4f4" stroke="none" /><path d="M6 6h12v10H6z" fill="#b8b8b8" stroke="none" /></Svg></TaskButton>
      <TaskButton aria-label="Chat"><Svg w={24}><defs><linearGradient id="chat" x2="1" y2="1"><stop stopColor="#8a7bb8" /><stop offset="1" stopColor="#5558cf" /></linearGradient></defs><path d="M12 1a11 11 0 1 1-5 21l-6 1 1.500-5A11 11 0 0 1 12 1z" fill="url(#chat)" stroke="none" /><rect x="6" y="7" width="9" height="10" rx="1" fill="#fff" stroke="none" /><path d="M16 10l3-2.500v9L16 14z" fill="#fff" stroke="none" /></Svg></TaskButton>
      <TaskButton aria-label="File Explorer" $running><Svg w={24} h={22}><path d="M0 2q0-2 2-2h6l3 3v4H0z" fill="#d89500" stroke="none" /><path d="M0 5l10-2h14v18H0z" fill="#ffcf48" stroke="none" /><path d="M4 22v-5q0-3 3-3h10q3 0 3 3v5z" fill="#0a76c9" stroke="none" /><path d="M7 18h10" stroke="#064f8c" /></Svg></TaskButton>
      <TaskButton aria-label="Edge"><Svg w={24}><defs><linearGradient id="edge" x2="1" y2=".3"><stop stopColor="#2aa9e8" /><stop offset=".6" stopColor="#37c6c0" /><stop offset="1" stopColor="#62dc55" /></linearGradient></defs><g stroke="none"><circle cx="12" cy="12" r="12" fill="#0c78d0" /><path d="M0 11C1 4 6 0 12 0c7 0 12 5 12 10.500 0 4-3 6-6.500 6-3 0-4-1.500-3-3 2-3-1-6-5-6C5 7.500 2 9 0 11z" fill="url(#edge)" /><path d="M9 10c-5 6 0 14 7 13.500 3-.5 5.500-2.500 6.500-5-4 2-10 1.500-11.500-2.500-.8-2 .2-4.500 2-5-1-1.500-3-1.800-4-1z" fill="#0d4c94" /><path d="M13 12c-2 4 1 6 5 6 2 0 4-1 5-2l-.5 2.500c-4 2-10 1.500-11.500-2.500-.6-1.500 0-3.500 2-4z" fill="#20262b" /></g></Svg></TaskButton>
      <TaskButton aria-label="Microsoft Store"><Svg w={24}><path d="M6.500 6V1.500h11V6" stroke="#26b3f0" strokeWidth="2" /><rect x="0" y="5" width="23" height="18" rx="3" fill="#f2f2f2" stroke="none" /><g stroke="none"><path d="M7 9h4.500v4.500H7z" fill="#f25022" /><path d="M12.500 9H17v4.500h-4.500z" fill="#7fba00" /><path d="M7 14.500h4.500V19H7z" fill="#00a4ef" /><path d="M12.500 14.500H17V19h-4.500z" fill="#ffb900" /></g></Svg></TaskButton>
      <TaskButton aria-label="Chrome" $active $running><ChromeColor /></TaskButton>
    </TaskButtons>
    <Tray>
      <TrayButton aria-label="Hidden icons"><Svg w={12} h={7} sw={1.300}><path d="M.5 6.500L6 1l5.500 5.500" /></Svg></TrayButton>
      <TrayButton aria-label="OneDrive"><Svg w={16} h={11}><path d="M4 10.500a3.800 3.800 0 0 1-1-7C4 0 9.500-.5 11 3c3 0 4.500 1.500 4.800 4z" fill="#999" stroke="none" /><path d="M3.500 11a3 3 0 0 1 0-6C7 5 8 6 10 6.500c3-1 6 .5 6 2.500S14.500 11 13 11z" fill="#fff" stroke="none" /></Svg></TrayButton>
      <TrayButton aria-label="Update"><Svg w={16} sw={1.300}><path d="M1 7C2 2.500 5 1 8 1c3 0 5 1.500 6.500 4M15 1v4.500h-4.500M1.500 15.500V11H6M1.500 11L5 15" /><circle cx="12" cy="12" r="4" fill="#0a7ae0" stroke="none" /></Svg></TrayButton>
      <TrayButton $w={44}>ENG</TrayButton>
      <TrayButton $w={32} aria-label="Wi-Fi"><Svg w={16} h={13} sw={1.400}><path d="M.7 5C5 .3 11 .3 15.300 5M3 7.500c3-3.200 7-3.200 10 0M5.300 9.700c1.700-1.600 3.700-1.600 5.400 0" /><circle cx="8" cy="11.300" r="1.200" fill="currentColor" stroke="none" /></Svg></TrayButton>
      <TrayButton $w={16} aria-label="Volume"><Svg w={16} h={14} sw={1.200}><path d="M1 4.500h2.500L7.500 1v12L3.500 9.500H1zM9.500 4.500q1.500 2.500 0 5" /><path d="M11.500 2.500q3 4.500 0 9M13.500 1q3.500 6 0 12" stroke="#777" /></Svg></TrayButton>
      <TrayButton $w={32} aria-label="Battery"><Svg w={16} h={13} sw={1.200}><path d="M6 3h8v9H3.500V8" /><path d="M6 5h6.500v5.500H5.500z" fill="currentColor" /><path d="M14 6h2v3h-2z" fill="currentColor" stroke="none" /><path d="M0 2h6v2.500Q6 6 3 6T0 4.500zM1 0h1v2H1zM4 0h1v2H4z" fill="currentColor" stroke="none" /></Svg></TrayButton>
      <Clock><Lines><span>6:27 PM</span><span>1/26/2023</span></Lines></Clock>
      <CountBadge>4</CountBadge>
    </Tray>
  </Taskbar>
);

export default function App() {
  return (
    <Shell>
      <GlobalStyle />
      <Browser />
      <EditorHeader />
      <Main>
        <ShapesPanel />
        <Workspace>
          <CanvasFrame>
            <Diagram />
            <VerticalThumb />
            <HorizontalThumb />
          </CanvasFrame>
          <Pages />
        </Workspace>
      </Main>
      <WindowsTaskbar />
    </Shell>
  );
}
